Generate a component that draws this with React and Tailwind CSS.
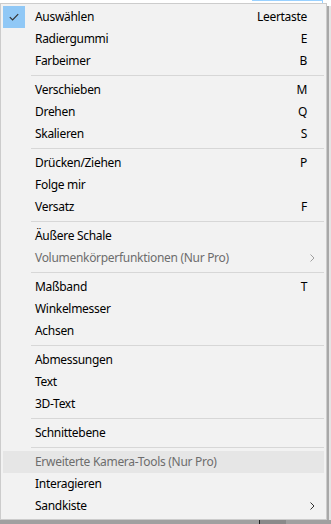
import React from "react";

const groups = [
  [
    { label: "Auswählen", key: "Leertaste", checked: true },
    { label: "Radiergummi", key: "E" },
    { label: "Farbeimer", key: "B" },
  ],
  [
    { label: "Verschieben", key: "M" },
    { label: "Drehen", key: "Q" },
    { label: "Skalieren", key: "S" },
  ],
  [
    { label: "Drücken/Ziehen", key: "P" },
    { label: "Folge mir" },
    { label: "Versatz", key: "F" },
  ],
  [
    { label: "Äußere Schale" },
    { label: "Volumenkörperfunktionen (Nur Pro)", disabled: true, sub: true },
  ],
  [
    { label: "Maßband", key: "T" },
    { label: "Winkelmesser" },
    { label: "Achsen" },
  ],
  [
    { label: "Abmessungen" },
    { label: "Text" },
    { label: "3D-Text" },
  ],
  [{ label: "Schnittebene" }],
  [
    { label: "Erweiterte Kamera-Tools (Nur Pro)", disabled: true, hover: true },
    { label: "Interagieren" },
    { label: "Sandkiste", sub: true },
  ],
];

function Chevron({ color }) {
  return (
    <svg width="5" height="8" viewBox="0 0 5 8" className="block">
      <path d="M0.5 0.5 L4 4 L0.5 7.5" fill="none" stroke={color} strokeWidth="1" />
    </svg>
  );
}

function Item({ item }) {
  const textColor = item.disabled ? "text-[#6d6d6d]" : "text-black";
  return (
    <div
      className={`relative flex h-[22px] items-center ${item.hover ? "bg-[#e6e6e6]" : ""}`}
    >
      <div className="flex h-[22px] w-[22px] items-center justify-center">
        {item.checked && (
          <div className="flex h-[22px] w-[22px] items-center justify-center bg-[#90c8f6]">
            <svg width="10" height="8" viewBox="0 0 10 8">
              <path d="M0.8 4.2 L3.6 7 L9.2 1.2" fill="none" stroke="#333" strokeWidth="1.2" />
            </svg>
          </div>
        )}
      </div>
      <div className={`ml-[10px] flex-1 whitespace-nowrap tracking-[-0.3px] ${textColor}`}>{item.label}</div>
      {item.key && <div className={`mr-[17px] tracking-[-0.3px] ${textColor}`}>{item.key}</div>}
      {item.sub && (
        <div className="mr-[9px]">
          <Chevron color={item.disabled ? "#a0a0a0" : "#333"} />
        </div>
      )}
    </div>
  );
}

export default function App() {
  return (
    <div
      className="flex h-[524px] w-[331px] flex-col overflow-hidden bg-white text-[12px] leading-none"
      style={{ fontFamily: '"Noto Sans", "Open Sans", sans-serif' }}
    >
      <div className="flex h-[3px] w-full">
        <div className="w-[252px]" />
        <div className="w-[71px] border-r border-t border-[#99d1ff]" />
      </div>
      <div className="flex flex-1">
        <div className="flex w-[327px] flex-col border border-[#cccccc] bg-[#f2f2f2] p-[2px]">
          {groups.map((g, gi) => (
            <div key={gi}>
              {gi > 0 && (
                <div className="py-[3px] pl-[28px]">
                  <div className="h-px bg-[#d7d7d7]" />
                </div>
              )}
              {g.map((item, i) => (
                <Item key={i} item={item} />
              ))}
            </div>
          ))}
        </div>
        <div className="flex w-[4px] flex-col">
          <div className="h-[3px]" />
          <div className="flex flex-1">
            <div className="w-[2px] bg-[#a8a8a8]" />
            <div className="w-[2px] bg-[#e4e4e4]" />
          </div>
        </div>
      </div>
      <div className="flex h-[4px] w-full bg-[#a0a0a0]">
        <div className="w-[259px]" />
        <div className="w-px bg-[#222]" />
        <div className="w-[26px] bg-[#8a8a8a]" />
      </div>
    </div>
  );
}
